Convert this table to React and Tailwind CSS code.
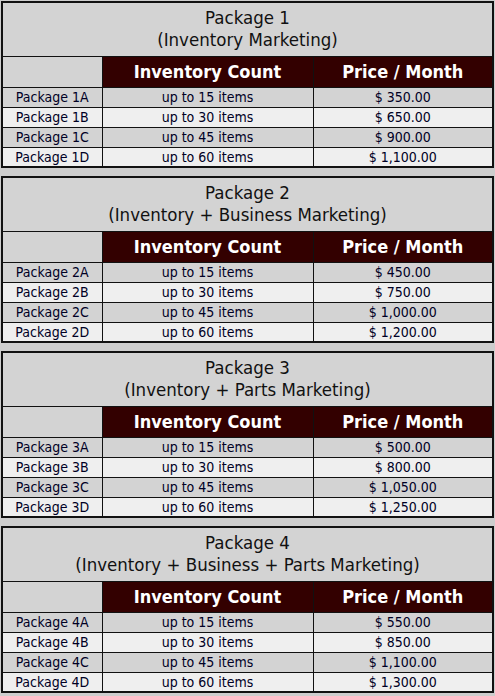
const packages = [
  {
    id: 1,
    subtitle: "(Inventory Marketing)",
    prices: ["$ 350.00", "$ 650.00", "$ 900.00", "$ 1,100.00"],
  },
  {
    id: 2,
    subtitle: "(Inventory + Business Marketing)",
    prices: ["$ 450.00", "$ 750.00", "$ 1,000.00", "$ 1,200.00"],
  },
  {
    id: 3,
    subtitle: "(Inventory + Parts Marketing)",
    prices: ["$ 500.00", "$ 800.00", "$ 1,050.00", "$ 1,250.00"],
  },
  {
    id: 4,
    subtitle: "(Inventory + Business + Parts Marketing)",
    prices: ["$ 550.00", "$ 850.00", "$ 1,100.00", "$ 1,300.00"],
  },
];

const tiers = [
  { letter: "A", count: "up to 15 items" },
  { letter: "B", count: "up to 30 items" },
  { letter: "C", count: "up to 45 items" },
  { letter: "D", count: "up to 60 items" },
];

const PackageTable = ({ pkg }) => (
  <table className="w-[493px] table-fixed border-collapse border-2 border-[#111]">
    <colgroup>
      <col className="w-[100px]" />
      <col className="w-[211px]" />
      <col />
    </colgroup>
    <tbody>
      <tr className="h-[54px] bg-[#d3d3d3]">
        <td
          colSpan={3}
          className="border border-[#111] text-center text-[18.5px] leading-[22px] text-[#111]"
        >
          Package {pkg.id}
          <br />
          {pkg.subtitle}
        </td>
      </tr>
      <tr className="h-[31px]">
        <td className="border border-[#111] bg-[#d3d3d3]"></td>
        <td className="border border-[#111] bg-[#330000] text-center text-[18px] font-bold text-white">
          Inventory Count
        </td>
        <td className="border border-[#111] bg-[#330000] text-center text-[18px] font-bold text-white">
          Price / Month
        </td>
      </tr>
      {tiers.map((tier, i) => (
        <tr
          key={tier.letter}
          className={`h-[20px] text-[14px] leading-[18px] text-[#000025] ${
            i % 2 === 0 ? "bg-[#d3d3d3]" : "bg-[#efefef]"
          }`}
        >
          <td className="border border-[#111] text-center">
            Package {pkg.id}
            {tier.letter}
          </td>
          <td className="border border-[#111] text-center">{tier.count}</td>
          <td className="border border-[#111] text-center">{pkg.prices[i]}</td>
        </tr>
      ))}
    </tbody>
  </table>
);

const App = () => {
  return (
    <div className="min-h-[696px] w-[495px] bg-[#cdcdcd] p-px font-['DejaVu_Sans_Condensed','DejaVu_Sans','Liberation_Sans',sans-serif]">
      <div className="flex flex-col gap-[8px]">
        {packages.map((pkg) => (
          <PackageTable key={pkg.id} pkg={pkg} />
        ))}
      </div>
    </div>
  );
};

export default App;
